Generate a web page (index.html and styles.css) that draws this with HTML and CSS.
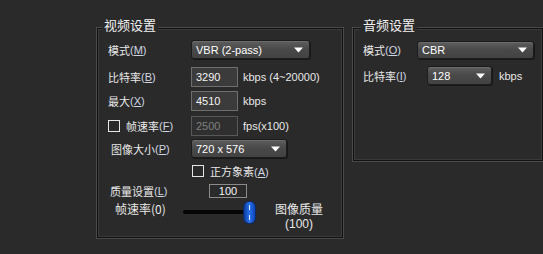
FILE: index.html
```html
<!DOCTYPE html>
<html lang="zh-CN">
<head>
    <meta charset="UTF-8">
    <title>编码设置</title>
    <link rel="stylesheet" href="styles.css">
</head>
<body>
    <div class="dialog">
        <fieldset class="group video">
            <legend>视频设置</legend>
            <div class="row r1">
                <span class="lbl">模式<span class="key">(<u>M</u>)</span></span>
                <div class="combo combo-mode"><span>VBR (2-pass)</span><svg class="arrow" width="9" height="6" viewBox="0 0 9 6"><path d="M0 0.5h9L4.5 5.5z" fill="#fff"/></svg></div>
            </div>
            <div class="row r2">
                <span class="lbl">比特率<span class="key">(<u>B</u>)</span></span>
                <div class="field">3290</div>
                <span class="unit">kbps (4~20000)</span>
            </div>
            <div class="row r3">
                <span class="lbl">最大<span class="key">(<u>X</u>)</span></span>
                <div class="field">4510</div>
                <span class="unit">kbps</span>
            </div>
            <div class="row r4">
                <span class="lbl lbl-check"><span class="check"></span>帧速率<span class="key">(<u>F</u>)</span></span>
                <div class="field disabled">2500</div>
                <span class="unit">fps(x100)</span>
            </div>
            <div class="row r5">
                <span class="lbl lbl-in3">图像大小<span class="key">(<u>P</u>)</span></span>
                <div class="combo combo-size"><span>720 x 576</span><svg class="arrow" width="9" height="6" viewBox="0 0 9 6"><path d="M0 0.5h9L4.5 5.5z" fill="#fff"/></svg></div>
            </div>
            <div class="row r6">
                <span class="lbl"></span>
                <span class="check check-sq"></span><span class="opt">正方象素<span class="key">(<u>A</u>)</span></span>
            </div>
            <div class="row r7">
                <span class="lbl lbl-in2">质量设置<span class="key">(<u>L</u>)</span></span>
                <div class="value-box">100</div>
            </div>
            <div class="row r8">
                <span class="lbl-slider">帧速率(0)</span>
                <div class="slider">
                    <div class="track"></div>
                    <div class="thumb"><i class="hl hl-top"></i><i class="hl hl-bottom"></i></div>
                </div>
                <div class="slider-end">
                    <span class="end-name">图像质量</span>
                    <span class="end-value">(100)</span>
                </div>
            </div>
        </fieldset>

        <fieldset class="group audio">
            <legend>音频设置</legend>
            <div class="row a1">
                <span class="lbl lbl-a1">模式<span class="key">(<u>O</u>)</span></span>
                <div class="combo combo-audio"><span>CBR</span><svg class="arrow" width="9" height="6" viewBox="0 0 9 6"><path d="M0 0.5h9L4.5 5.5z" fill="#fff"/></svg></div>
            </div>
            <div class="row a2">
                <span class="lbl lbl-a2">比特率<span class="key">(<u>I</u>)</span></span>
                <div class="combo combo-rate"><span>128</span><svg class="arrow" width="9" height="6" viewBox="0 0 9 6"><path d="M0 0.5h9L4.5 5.5z" fill="#fff"/></svg></div>
                <span class="unit">kbps</span>
            </div>
        </fieldset>
    </div>
</body>
</html>
```

FILE: styles.css
```css
body {
    margin: 0;
    background-color: #2a2a2a;
    color: #e8e8e8;
    font-family: "Liberation Sans", "Noto Sans CJK SC", sans-serif;
    font-size: 11px;
    height: 254px;
    overflow: hidden;
}
.dialog {
    display: flex;
    align-items: flex-start;
    padding: 17px 0 0 97px;
}
.group {
    margin: 0;
    padding: 0 8px 7px 9px;
    border: 1px solid #111;
    box-shadow: 0 0 0 1px #4a4a4a, inset 0 0 0 1px #3a3a3a;
    min-width: 0;
}
.group legend {
    font-family: "Noto Sans CJK SC", sans-serif;
    font-size: 13px;
    line-height: 16px;
    padding: 0 2px 6px 2px;
    margin-left: -5px;
    color: #f2f2f2;
    background-color: #2a2a2a;
}
.video {
    width: 246px;
    box-sizing: border-box;
}
.audio {
    width: 190px;
    height: 144px;
    box-sizing: border-box;
    margin-left: 10px;
}
.audio legend {
    margin-left: -2px;
}
.row {
    display: flex;
    align-items: center;
}
.r1 { margin-top: 1px; height: 19px; }
.r2 { margin-top: 8px; height: 20px; }
.r3 { margin-top: 4px; height: 20px; }
.r4 { margin-top: 5px; height: 20px; }
.r5 { margin-top: 3px; height: 19px; }
.r6 { margin-top: 6px; height: 13px; }
.r7 { margin-top: 7px; height: 14px; }
.r8 { margin-top: 4px; height: 28px; align-items: flex-start; }
.a1 { margin-top: 2px; height: 18px; }
.a2 { margin-top: 7px; height: 19px; }

.lbl {
    width: 84px;
    flex: none;
    box-sizing: border-box;
    padding-left: 1px;
    font-family: "Noto Sans CJK SC", sans-serif;
    font-size: 11px;
    white-space: nowrap;
    display: flex;
    align-items: center;
}
.lbl-in3 { padding-left: 4px; }
.lbl-in2 { padding-left: 3px; }
.lbl-a1 { width: 54px; padding-left: 0; }
.lbl-a2 { width: 64px; padding-left: 0; }
.key {
    font-family: "Liberation Sans", sans-serif;
    font-size: 11px;
    color: #cfd6e2;
}
.key u {
    text-underline-offset: 1px;
}
.check {
    width: 12px;
    height: 12px;
    border: 1px solid #e6e6e6;
    flex: none;
    box-sizing: border-box;
    margin-right: 6px;
}
.check-sq {
    margin-left: 1px;
}
.opt {
    font-family: "Noto Sans CJK SC", sans-serif;
}

.combo {
    height: 100%;
    box-sizing: border-box;
    display: flex;
    align-items: center;
    justify-content: space-between;
    padding: 0 6px 0 4px;
    border: 1px solid #1c1c1c;
    border-radius: 3px;
    background: linear-gradient(#5e5e5e, #4a4a4a 45%, #424242);
    box-shadow: inset 0 1px 0 #6c6c6c, 1px 1px 0 #181818;
    color: #fff;
    font-size: 11px;
}
.combo-mode { width: 119px; }
.combo-size { width: 96px; }
.combo-audio { width: 117px; }
.combo-rate { width: 65px; }

.field {
    width: 47px;
    height: 100%;
    box-sizing: border-box;
    border: 1px solid #6e6e6e;
    background-color: #3b3b3b;
    color: #f4f4f4;
    padding-left: 4px;
    display: flex;
    align-items: center;
}
.field.disabled {
    border-color: #585858;
    background-color: #2f2f2f;
    color: #808080;
}
.unit {
    margin-left: 5px;
    white-space: nowrap;
}
.a2 .unit {
    margin-left: 7px;
}

.value-box {
    margin-left: 18px;
    width: 38px;
    height: 100%;
    box-sizing: border-box;
    border: 1px solid #8a8a8a;
    text-align: center;
    line-height: 12px;
    color: #f4f4f4;
}

.lbl-slider {
    width: 76px;
    flex: none;
    box-sizing: border-box;
    padding-left: 8px;
    font-family: "Noto Sans CJK SC", sans-serif;
    font-size: 12px;
    line-height: 14px;
}
.slider {
    position: relative;
    width: 73px;
    height: 22px;
    flex: none;
}
.track {
    position: absolute;
    left: 0;
    top: 8px;
    width: 64px;
    height: 4px;
    border-radius: 2px;
    background-color: #050505;
}
.thumb {
    position: absolute;
    left: 61px;
    top: 0;
    width: 11px;
    height: 21px;
    border-radius: 5px;
    background: linear-gradient(to right, #0a3a9c, #2a74ec 50%, #0c44b4);
    box-shadow: 0 0 0 1px #0a2a6a;
}
.hl {
    position: absolute;
    left: 5px;
    width: 1px;
    height: 5px;
    background-color: #dfe8ff;
}
.hl-top { top: 3px; }
.hl-bottom { bottom: 3px; }
.slider-end {
    margin-left: 13px;
    margin-top: -2px;
    width: 60px;
    display: flex;
    flex-direction: column;
    align-items: center;
}
.end-name {
    font-family: "Noto Sans CJK SC", sans-serif;
    font-size: 12px;
    line-height: 17px;
}
.end-value {
    font-size: 12px;
    line-height: 14px;
}
```
